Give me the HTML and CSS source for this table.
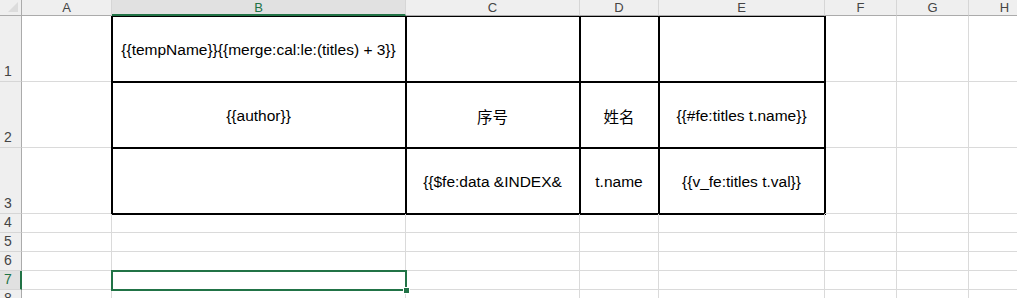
FILE: index.html
```html
<!DOCTYPE html>
<html>
<head>
<meta charset="utf-8">
<link rel="stylesheet" href="styles.css">
</head>
<body>
<div class="sheet">
  <div class="corner"><span class="tri"></span></div>
  <div class="ch">A</div>
  <div class="ch ch-sel">B</div>
  <div class="ch">C</div>
  <div class="ch">D</div>
  <div class="ch">E</div>
  <div class="ch">F</div>
  <div class="ch">G</div>
  <div class="ch">H</div>

  <div class="rh">1</div>
  <div class="c"></div>
  <div class="c t">{{tempName}}{{merge:cal:le:(titles) + 3}}</div>
  <div class="c t"></div>
  <div class="c t"></div>
  <div class="c t"></div>
  <div class="c"></div>
  <div class="c"></div>
  <div class="c"></div>

  <div class="rh">2</div>
  <div class="c"></div>
  <div class="c t">{{author}}</div>
  <div class="c t">序号</div>
  <div class="c t">姓名</div>
  <div class="c t">{{#fe:titles t.name}}</div>
  <div class="c"></div>
  <div class="c"></div>
  <div class="c"></div>

  <div class="rh">3</div>
  <div class="c"></div>
  <div class="c t"></div>
  <div class="c t">{{$fe:data &amp;INDEX&amp;</div>
  <div class="c t">t.name</div>
  <div class="c t">{{v_fe:titles t.val}}</div>
  <div class="c"></div>
  <div class="c"></div>
  <div class="c"></div>

  <div class="rh">4</div>
  <div class="c"></div><div class="c"></div><div class="c"></div><div class="c"></div><div class="c"></div><div class="c"></div><div class="c"></div><div class="c"></div>
  <div class="rh">5</div>
  <div class="c"></div><div class="c"></div><div class="c"></div><div class="c"></div><div class="c"></div><div class="c"></div><div class="c"></div><div class="c"></div>
  <div class="rh">6</div>
  <div class="c"></div><div class="c"></div><div class="c"></div><div class="c"></div><div class="c"></div><div class="c"></div><div class="c"></div><div class="c"></div>
  <div class="rh rh-sel">7</div>
  <div class="c"></div><div class="c sel"></div><div class="c"></div><div class="c"></div><div class="c"></div><div class="c"></div><div class="c"></div><div class="c"></div>
  <div class="rh">8</div>
  <div class="c"></div><div class="c"></div><div class="c"></div><div class="c"></div><div class="c"></div><div class="c"></div><div class="c"></div><div class="c"></div>
</div>
</body>
</html>
```

FILE: styles.css
```css
html, body {
  margin: 0;
  padding: 0;
  background: #fff;
  overflow: hidden;
}

.sheet {
  display: grid;
  grid-template-columns: 22px 90px 294px 174px 79px 166px 72px 72px 72px;
  grid-template-rows: 16px 66px 66px 66px 19px 19px 19px 19px 19px;
  width: 1041px;
  font-family: "Liberation Sans", "Noto Sans CJK SC", sans-serif;
}

.sheet > div {
  box-sizing: border-box;
}

.corner {
  background: #efefef;
  border-right: 1px solid #ababab;
  border-bottom: 1px solid #ababab;
  position: relative;
  z-index: 1;
  display: flex;
  align-items: flex-end;
  justify-content: flex-end;
  padding: 0 3px 3px 0;
}

.tri {
  width: 10px;
  height: 10px;
  background: #dcdcdc;
  clip-path: polygon(100% 0, 100% 100%, 0 100%);
}

.ch {
  background: #efefef;
  border-right: 1px solid #d6d6d6;
  border-bottom: 1px solid #ababab;
  color: #444;
  font-size: 13px;
  display: flex;
  align-items: center;
  justify-content: center;
  line-height: 1;
  position: relative;
  z-index: 1;
}

.ch-sel {
  background: #e1e1e1;
  border-bottom: 2px solid #217346;
  color: #217346;
}

.rh {
  background: #efefef;
  border-right: 1px solid #ababab;
  border-bottom: 1px solid #d6d6d6;
  color: #444;
  font-size: 14px;
  line-height: 1;
  display: flex;
  align-items: flex-end;
  padding: 0 0 3px 4px;
}

.rh-sel {
  background: #e1e1e1;
  border-right: 2px solid #217346;
  color: #217346;
}

.c {
  border-right: 1px solid #dadada;
  border-bottom: 1px solid #dadada;
}

.t {
  outline: 2px solid #000;
  outline-offset: -1px;
  display: flex;
  align-items: center;
  justify-content: center;
  font-size: 15.5px;
  color: #000;
  white-space: nowrap;
  padding-top: 3px;
}

.sel {
  outline: 2px solid #217346;
  outline-offset: -1px;
  position: relative;
}

.sel::after {
  content: "";
  position: absolute;
  right: -5px;
  bottom: -5px;
  width: 5px;
  height: 5px;
  background: #217346;
  border: 1px solid #fff;
}
```
